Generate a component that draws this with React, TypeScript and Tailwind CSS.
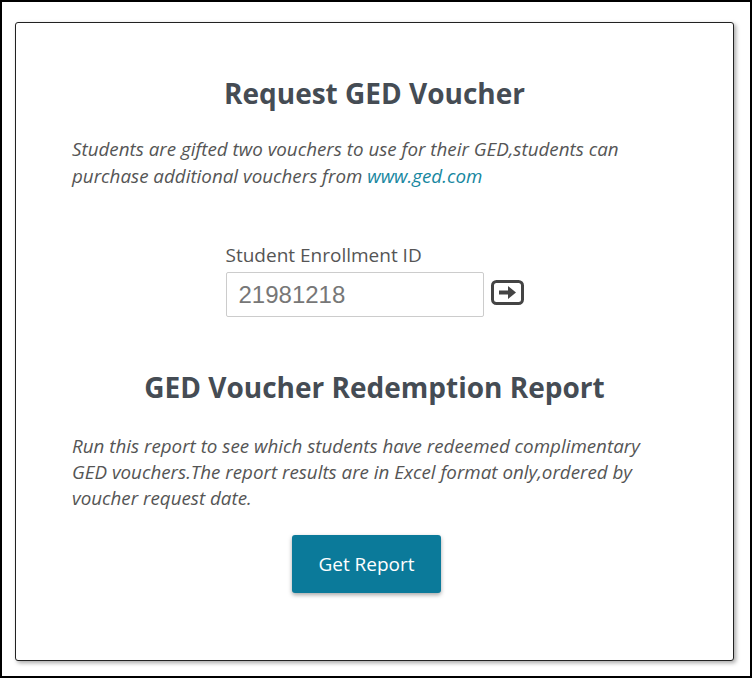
export default function App() {
  return (
    <div className="h-[678px] w-[752px] border-2 border-black bg-white pt-5 pl-[13px] pr-4 font-['Open_Sans',sans-serif]">
      <div className="flex h-[639px] w-[719px] flex-col items-center rounded-[3px] border border-[#222] bg-white px-14 pt-[52px] shadow-[2px_2px_4px_rgba(0,0,0,0.35)]">
        <h2 className="text-[28px] font-bold leading-9 text-[#454c54]">Request GED Voucher</h2>
        <p className="mt-[25px] w-full text-[18.8px] italic leading-[27px] text-[#555]">
          Students are gifted two vouchers to use for their GED,students can purchase additional vouchers from{" "}
          <a href="#" className="text-[#17879f]">www.ged.com</a>
        </p>

        <div className="mt-[53px] flex flex-col">
          <label className="text-[19px] leading-6 text-[#555]">Student Enrollment ID</label>
          <div className="mt-[5px] flex items-center gap-[7px]">
            <input
              type="text"
              defaultValue="21981218"
              className="h-[45px] w-[258px] rounded-[2px] border border-[#ccc] px-3 font-['Liberation_Sans',Arial,sans-serif] text-[24px] text-[#777] outline-none"
            />
            <svg width="33" height="25" viewBox="0 0 33 25" className="mb-[4px]">
              <rect x="1.5" y="1.5" width="30" height="22" rx="4" fill="none" stroke="#444" strokeWidth="3" />
              <path d="M8 10.5h9v-4.5l8 6.5-8 6.5v-4.5h-9z" fill="#444" />
            </svg>
          </div>
        </div>

        <h2 className="mt-[52px] text-[28px] font-bold leading-9 text-[#454c54]">GED Voucher Redemption Report</h2>
        <p className="mt-[28px] w-full text-[18.8px] italic leading-[26px] text-[#555]">
          Run this report to see which students have redeemed complimentary GED vouchers.The report results are in Excel format only,ordered by voucher request date.
        </p>

        <button className="mt-[24px] mr-4 h-[58px] w-[149px] rounded-[3px] bg-[#0b7a9a] text-[19px] text-white shadow-[0_2px_4px_rgba(0,0,0,0.35)]">
          Get Report
        </button>
      </div>
    </div>
  );
}
